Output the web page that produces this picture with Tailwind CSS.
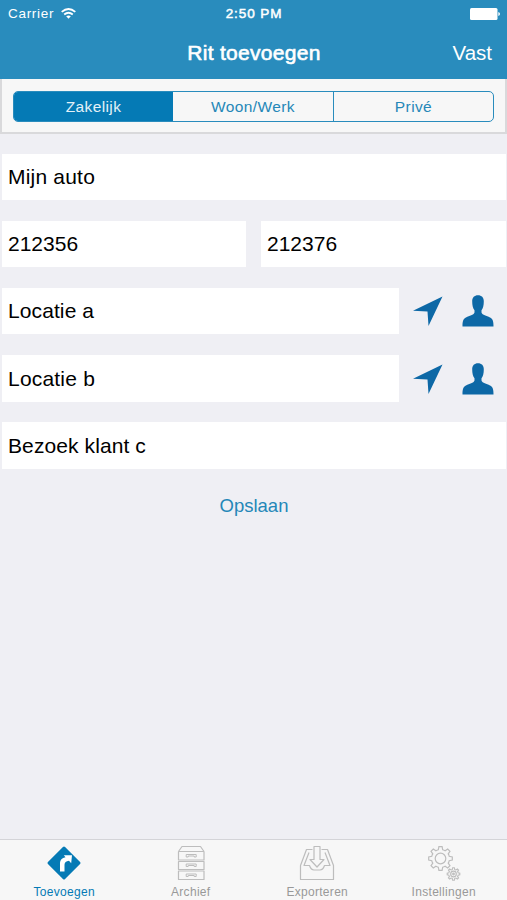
<!DOCTYPE html>
<html lang="nl">
  <head>
    <meta charset="UTF-8" />
    <meta name="viewport" content="width=device-width, initial-scale=1.0" />
    <title>Rit toevoegen</title>
    <script src="https://cdn.jsdelivr.net/npm/@tailwindcss/browser@4"></script>
  </head>
  <body class="bg-[#efeff4] font-['Liberation_Sans',Arial,sans-serif] text-black">
    <!-- Herbruikbare iconen -->
    <svg class="hidden">
      <symbol id="arrow" viewBox="0 0 30 30">
        <path d="M29.5 .5 15.5 30 14.5 15.5 0 14.8Z" />
      </symbol>
      <symbol id="person" viewBox="0 0 32 32">
        <path
          d="M16 .3C19.600 .3 21.800 2.500 21.800 6.300 21.800 10.500 21 13.500 19.500 15.300V17.600C20.500 20.300 24.500 20.800 28 22.500 30.800 24 31.500 26 31.500 31.500H.5C.5 26 1.200 24 4 22.500 7.500 20.800 11.500 20.300 12.500 17.600V15.300C11 13.500 10.200 10.500 10.200 6.300 10.200 2.500 12.400 .3 16 .3Z"
        />
      </symbol>
    </svg>

    <div class="flex h-screen flex-col">
      <!-- Statusbalk en navigatie -->
      <header class="h-[79px] shrink-0 bg-[#298cbd] text-white">
        <div class="grid h-7 grid-cols-3 items-center pl-2 pr-[7px] text-[13px]">
          <div class="flex items-center gap-[7px]">
            <span class="text-[13.5px] tracking-[0.7px]">Carrier</span>
            <svg class="-mt-0.5 h-[11px] w-[15px]" viewBox="0 0 15 11" fill="none" stroke="white" stroke-width="1.8">
              <path d="M.7 3.900Q7.500-1.900 14.300 3.900M3.200 6.500Q7.500 2.900 11.800 6.500" />
              <path d="M5.200 8.300Q7.500 6.500 9.800 8.300L7.500 10.800Z" fill="white" stroke="none" />
            </svg>
          </div>
          <span class="text-center text-[13.5px] tracking-[0.9px] [-webkit-text-stroke:0.5px_white]">2:50 PM</span>
          <svg class="h-3 w-[30px] justify-self-end" viewBox="0 0 30 12" fill="white">
            <rect width="27.500" height="12" rx="1.500" />
            <path d="M28.300 4Q30 4.500 30 6T28.300 8Z" />
          </svg>
        </div>
        <div class="grid h-[49px] grid-cols-[1fr_auto_1fr] items-center pr-[15px]">
          <h1 class="col-start-2 pl-4 text-[21px] tracking-[0.3px] [-webkit-text-stroke:0.6px_white]">Rit toevoegen</h1>
          <button class="justify-self-end pt-px text-[20.5px]">Vast</button>
        </div>
      </header>

      <!-- Soort rit -->
      <div class="h-[55px] shrink-0 border-x-2 border-b-2 border-[#d9d9db] bg-[#f7f7f7] px-[11px] pt-3">
        <div class="grid h-[31px] grid-cols-[159px_161px_1fr] overflow-hidden rounded-[5px] border border-[#298cbd] text-[15.5px] tracking-[0.4px] text-[#2587b8]">
          <button class="bg-[#057ab5] text-[#e3f1f8]">Zakelijk</button>
          <button class="border-r border-[#298cbd]">Woon/Werk</button>
          <button>Privé</button>
        </div>
      </div>

      <!-- Formulier -->
      <main class="flex flex-1 flex-col gap-[21px] pl-0.5 pr-px pt-5 text-[21px]">
        <div class="flex h-[46px] items-center bg-white pl-1.5 tracking-[0.2px]">Mijn auto</div>
        <div class="grid grid-cols-[244px_1fr] gap-[15px]">
          <div class="flex h-[46px] items-center bg-white pl-1.5">212356</div>
          <div class="flex h-[46px] items-center bg-white pl-1.5">212376</div>
        </div>
        <div class="flex items-center pr-3">
          <div class="flex h-[46px] flex-1 items-center bg-white pl-1.5 tracking-[0.1px]">Locatie a</div>
          <svg class="ml-3.5 h-[30px] w-[30px] fill-[#0d68a6]"><use href="#arrow" /></svg>
          <svg class="ml-[19px] h-8 w-8 fill-[#0d68a6]"><use href="#person" /></svg>
        </div>
        <div class="flex items-center pr-3">
          <div class="flex h-[47px] flex-1 items-center bg-white pl-1.5 tracking-[0.2px]">Locatie b</div>
          <svg class="ml-3.5 h-[30px] w-[30px] fill-[#0d68a6]"><use href="#arrow" /></svg>
          <svg class="ml-[19px] h-8 w-8 fill-[#0d68a6]"><use href="#person" /></svg>
        </div>
        <div class="-mt-px flex h-[47px] items-center bg-white pl-1.5 tracking-[0.1px]">Bezoek klant c</div>
        <button class="self-center text-[18.5px] leading-8 text-[#2587b8]">Opslaan</button>
      </main>

      <!-- Tabbalk -->
      <nav class="grid h-[61px] shrink-0 grid-cols-4 border-t border-[#d4d4d8] bg-[#f7f7f7] pl-px text-[12px] tracking-[0.3px] text-[#999]">
        <a class="flex flex-col items-center pt-[5px] text-[#057ab5]">
          <svg class="h-[38px] w-[38px]" viewBox="0 0 38 38">
            <path d="M19 3 34 18 19 33 4 18Z" fill="#057ab5" stroke="#057ab5" stroke-width="3" stroke-linejoin="round" />
            <path d="M15 26.500V17.800Q15 13.500 20.500 12.200L18.800 10.200H27L26.200 18.300 24 15.800Q19.500 16.500 19.500 19.700V26.500Z" fill="white" />
          </svg>
          <span class="pt-px leading-4">Toevoegen</span>
        </a>
        <a class="flex flex-col items-center pt-[5px]">
          <svg class="h-[38px] w-[38px]" viewBox="0 0 38 38" fill="none" stroke="#bdbdbd" stroke-width="1.200" stroke-linejoin="round">
            <path d="M6.500 6.500 10 1.500H28.500L32 6.500M6.500 6.500H32V15H6.500ZM6.500 16.500H32V24.500H6.500ZM6.500 26H32V34.500H6.500Z" />
            <path d="M14.200 12V9.500H24.200V12H22.200V11H16.200V12ZM14.200 21.500V19H24.200V21.500H22.200V20.500H16.200V21.500ZM14.200 31.500V29H24.200V31.500H22.200V30.500H16.200V31.500Z" stroke-width="1" />
          </svg>
          <span class="pt-px leading-4">Archief</span>
        </a>
        <a class="flex flex-col items-center pt-[5px]">
          <svg class="h-[38px] w-[38px]" viewBox="0 0 38 38" fill="none" stroke="#bdbdbd" stroke-width="1.200" stroke-linejoin="round">
            <path d="M14.500 4.500H8.500L2.500 20.500V34.500H35.500V20.500L29.500 4.500H23.500" />
            <path d="M11 7.500 6 20.500H11.500Q13 25 16 25H22Q25 25 26.500 20.500H32L27 7.500" />
            <path d="M16 1.500H22V14.500H26L19 22 12 14.500H16Z" />
          </svg>
          <span class="pt-px leading-4">Exporteren</span>
        </a>
        <a class="flex flex-col items-center pt-[5px]">
          <svg class="h-[38px] w-[38px]" viewBox="0 0 38 38" fill="none" stroke="#bdbdbd" stroke-width="1.200">
            <defs>
              <path id="tooth" d="M-3.440-8.310A9 9 0 0 1-2.200-8.730L-1.600-11.800H1.600L2.200-8.730A9 9 0 0 1 3.440-8.310" />
              <g id="gear">
                <use href="#tooth" />
                <use href="#tooth" transform="rotate(45)" />
                <use href="#tooth" transform="rotate(90)" />
                <use href="#tooth" transform="rotate(135)" />
                <use href="#tooth" transform="rotate(180)" />
                <use href="#tooth" transform="rotate(225)" />
                <use href="#tooth" transform="rotate(270)" />
                <use href="#tooth" transform="rotate(315)" />
                <circle r="5.300" />
              </g>
            </defs>
            <use href="#gear" x="15.500" y="13.500" />
            <use href="#gear" transform="translate(28.500 29) scale(.53)" stroke-width="2.200" />
            <circle cx="28.500" cy="29" r=".8" />
          </svg>
          <span class="pt-px leading-4">Instellingen</span>
        </a>
      </nav>
    </div>
  </body>
</html>
